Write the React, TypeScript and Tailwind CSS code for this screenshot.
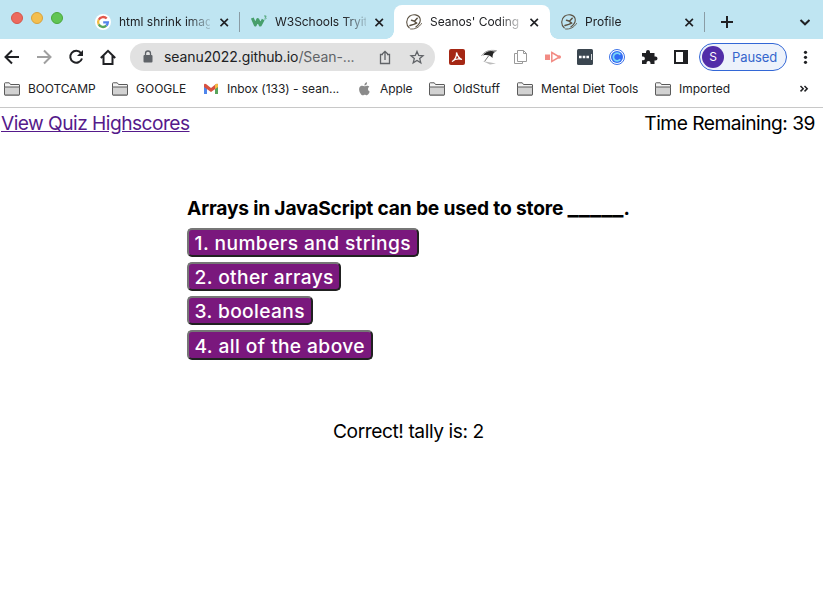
import { type ReactNode } from "react";

function Scribble() {
  return (
    <svg width="16" height="16" viewBox="0 0 16 16" fill="none" stroke="#5b5142" strokeLinecap="round">
      <path d="M3.200 13.800C-.3 11 0 5 3.500 2.300 7-.3 12.500.4 14 4.300c.8 3-1 6.500-4.200 8.700" strokeWidth="1.100" />
      <path d="M11.200 4.200L8.500 7.200 5.500 6.300" strokeWidth="1.500" />
      <path d="M8.500 7.500l2.200 1.600-3 1.300L4 11.500" strokeWidth="1.500" strokeLinejoin="round" />
      <path d="M4.500 15c4.500.5 8.500-1.500 11-5.500" strokeWidth=".9" />
    </svg>
  );
}

function GoogleIcon() {
  return (
    <svg width="16" height="16" viewBox="0 0 16 16">
      <circle cx="8" cy="8" r="8" fill="#fff" />
      <g fill="none" strokeWidth="2.300">
        <path d="M11.700 4.600A4.900 4.900 0 0 0 3.700 5.700" stroke="#e2574a" />
        <path d="M3.700 5.700a4.900 4.900 0 0 0 0 4.700" stroke="#f2bd42" />
        <path d="M3.700 10.400a4.900 4.900 0 0 0 7.600 1.300" stroke="#58a55c" />
        <path d="M11.300 11.700A4.900 4.900 0 0 0 12.900 8.300H8.200" stroke="#5383ec" />
      </g>
    </svg>
  );
}

function W3Icon() {
  return (
    <svg width="16" height="16" viewBox="0 0 16 16" fill="none" stroke="#479f6c">
      <path d="M1.300 4l3 7 2.400-5.500L9.300 11l2.900-5.500" strokeWidth="3" strokeLinejoin="round" />
      <path d="M13 2h2.200L14.200 3.300c1.600.2 1.100 2.200-.9 1.700" strokeWidth=".9" />
    </svg>
  );
}

function Cross() {
  return (
    <svg width="9" height="9" viewBox="0 0 9 9" stroke="#202124" strokeWidth="1.700" className="shrink-0">
      <path d="M.5.800l7.400 7.400M7.900.800L.5 8.200" />
    </svg>
  );
}

function Folder() {
  return (
    <svg width="16" height="14" viewBox="0 0 16 14" stroke="#5b5b5b" className="shrink-0">
      <path d="M.5 12.500V1.500Q.5.800 1.200.8H5.300L6.500 2.500H15Q15.500 2.500 15.500 3V12.500Q15.500 13 15 13H1Q.5 13 .5 12.500Z" fill="#f4f4f4" />
      <path d="M.5 5.500V12.500Q.5 13 1 13H15Q15.500 13 15.500 12.500V5.500Q15.500 5 15 5H1Q.5 5 .5 5.500Z" fill="#d2d2d2" />
    </svg>
  );
}

function Tab({ icon, children, className = "", active = false }: { icon: ReactNode; children: string; className?: string; active?: boolean }) {
  return (
    <div className={`relative flex h-[34px] shrink-0 items-center ${active ? "w-[156px] rounded-t-[8px] bg-white" : ""} ${className}`}>
      {active && (
        <>
          <span className="absolute bottom-0 -left-2 size-2 bg-[radial-gradient(circle_at_0_0,transparent_7.500px,white_8px)]" />
          <span className="absolute bottom-0 -right-2 size-2 bg-[radial-gradient(circle_at_100%_0,transparent_7.500px,white_8px)]" />
        </>
      )}
      <span className="shrink-0">{icon}</span>
      <span className="ml-2 w-[91px] whitespace-nowrap text-[12px] leading-4 text-[#202124] [mask-image:linear-gradient(to_right,black_68px,transparent_96px)]">{children}</span>
      <span className="ml-[9px]"><Cross /></span>
    </div>
  );
}

function Bookmark({ icon, children, className }: { icon: ReactNode; children: string; className: string }) {
  return (
    <div className={`flex shrink-0 items-center gap-2 ${className}`}>
      {icon}
      <span className="whitespace-nowrap">{children}</span>
    </div>
  );
}

function Answer({ children, className }: { children: string; className: string }) {
  return (
    <button className={`flex items-center rounded-[5px] border-2 border-t-[#767676] border-l-[#767676] border-r-[#212121] border-b-[#212121] bg-[#7a187d] pl-[5.500px] text-[19.200px] leading-6 font-medium whitespace-nowrap text-white ${className}`}>
      {children}
    </button>
  );
}

export default function App() {
  return (
    <div className="h-[591px] w-[823px] overflow-hidden bg-white font-['Inter','Liberation_Sans',sans-serif] text-black">
      <header className="border-b border-[#c8c8c8]">
        <div className="flex h-[39px] items-end bg-[#bfe5f2]">
          <div className="flex h-full w-[84px] shrink-0 gap-2 pt-3 pl-[11px]">
            <span className="size-3 rounded-full border border-[#d5564a] bg-[#ed6a5e]" />
            <span className="size-3 rounded-full border border-[#d9a23c] bg-[#f4bf4f]" />
            <span className="size-3 rounded-full border border-[#4aa73c] bg-[#61c554]" />
          </div>
          <Tab className="w-[155px] pl-[11px] [&>span:last-child]:ml-[10px]" icon={<GoogleIcon />}>html shrink imag</Tab>
          <span className="mb-[7px] h-5 w-px bg-[#8a9ca5]" />
          <Tab className="w-[154px] pl-[11px] tracking-[-0.05px]" icon={<W3Icon />}>W3Schools Tryit</Tab>
          <Tab className="pl-3 tracking-[-0.05px]" icon={<Scribble />} active>Seanos' Coding</Tab>
          <Tab className="w-[154px] pl-[11px]" icon={<Scribble />}>Profile</Tab>
          <span className="mb-[7px] h-5 w-px bg-[#8a9ca5]" />
          <svg width="118" height="34" viewBox="705 5 118 34" fill="none" stroke="#202124" strokeWidth="2">
            <path d="M721 22H733M727 16V28M800.500 20l4.500 4.300L809.500 20" />
          </svg>
        </div>

        <div className="flex h-9 items-center">
          <svg width="130" height="36" viewBox="0 39 130 36" fill="none" stroke="#202124" strokeWidth="2" className="shrink-0">
            <path d="M19 57H6M12 50.500L5.500 57l6.500 6.500" />
            <path d="M37 57H50M44 50.500L50.500 57 44 63.500" stroke="#a0a0a0" />
            <path d="M81 53A6 6 0 1 0 82 58.500" />
            <path d="M83 50V56H77Z" fill="#202124" stroke="none" />
            <path d="M100.800 58L108 50.800 115.200 58M103.500 56V64H112.500V56" />
          </svg>
          <div className="flex h-7 w-[305px] shrink-0 items-center rounded-full bg-[#e1e1e1]">
            <svg width="34" height="28" viewBox="130 43 34 28">
              <rect x="143.500" y="55" width="9" height="7.500" rx="1" fill="#5f6368" />
              <path d="M145.500 55V53.500a2.500 2.500 0 0 1 5 0V55" fill="none" stroke="#5f6368" strokeWidth="1.300" />
            </svg>
            <span className="w-max shrink-0 pb-[2px] text-[14px] tracking-[-0.09px] whitespace-nowrap text-[#202124]">seanu2022.github.io<span className="text-[#606367]">/Sean-...</span></span>
            <svg width="60" height="28" viewBox="375 43 60 28" fill="none" stroke="#606367" strokeWidth="1.300" className="ml-auto">
              <path d="M383 54.500H380.500V63.500H389.500V54.500H387M385 60V51.500M382.300 54L385 51.300 387.700 54" />
              <path d="M417 51.500L418.700 55.500 423 55.800 419.700 58.600 420.800 62.800 417 60.500 413.200 62.800 414.300 58.600 411 55.800 415.300 55.500Z" />
            </svg>
          </div>
          <svg width="264" height="36" viewBox="435 39 264 36" fill="none" className="shrink-0">
            <rect x="449" y="49" width="16" height="16" rx="2" fill="#a52714" />
            <path d="M456.500 52.500C457.500 56 459 58.500 462 59.500 458 58 455 59 452 61.500 455 60 457 56 456.500 52.500Z" stroke="#fff" strokeWidth="1.300" />
            <path d="M481.500 56C484 51.500 489 49.500 496.500 50.700L494 52.500" stroke="#8b8b8b" strokeWidth=".8" />
            <path d="M483 55.500C485 51.500 490 50 495 51.500 493 53 492.500 55 492.500 58 490.500 55.500 487 54.500 483 55.500Z" fill="#252525" />
            <path d="M488.500 56L484.500 61.500" stroke="#777" />
            <path d="M482.500 61L496 63.500 490 64.500Z" fill="#bdbdbd" />
            <path d="M517.500 53.500V50.500H523.500L526.500 53.500V61.500H517.500V53.500H514.500V63.500H522.500V61.500M523.500 50.500V53.500H526.500" stroke="#9a9a9a" />
            <rect x="545" y="54.500" width="5" height="5.500" fill="#f28b84" />
            <path d="M551.800 52.500L559.500 57 551.800 61.500Z" stroke="#f28b84" strokeWidth="1.500" />
            <circle cx="559.300" cy="57" r="1.700" fill="#f28b84" />
            <rect x="577" y="49" width="16" height="16" rx="1.500" fill="#3b4650" />
            <path d="M579 55.700h2.600v2.600H579zM582.700 55.700h2.600v2.600H582.700zM586.400 55.700h2.600v2.600H586.400zM591 54h.8v6H591z" fill="#fff" />
            <circle cx="617" cy="57" r="7.500" stroke="#3d73e8" strokeWidth="1" />
            <circle cx="617" cy="57" r="6" fill="#326bf4" />
            <path d="M620.200 54.700A3.800 3.800 0 1 0 620.200 59.300" stroke="#78d5f7" strokeWidth="1.800" />
            <path d="M642 53H646V52A2 2 0 0 1 650 52V53H654.500V56.500H655.500A1.900 1.900 0 0 1 655.500 60.500H654.500V64H650.500V63A1.900 1.900 0 0 0 646.500 63V64H642V60.300H643A1.900 1.900 0 0 0 643 56.500H642Z" fill="#202124" />
            <path d="M675 51H687V63H675Z" stroke="#202124" strokeWidth="2" />
            <path d="M683 50H688V64H683Z" fill="#202124" />
          </svg>
          <div className="flex h-7 w-[88px] shrink-0 items-center rounded-full border border-[#3367d6] bg-[#edf2fb] pl-[2px] text-[#3565cc]">
            <span className="flex size-[22px] items-center justify-center rounded-full bg-[#512da8] text-[12px] text-white">S</span>
            <span className="ml-2 pt-px text-[13px] tracking-[-0.1px]">Paused</span>
          </div>
          <svg width="36" height="36" viewBox="787 39 36 36" fill="#202124">
            <circle cx="805.500" cy="52.300" r="1.600" /><circle cx="805.500" cy="57.300" r="1.600" /><circle cx="805.500" cy="62.300" r="1.600" />
          </svg>
        </div>

        <div className="flex h-8 items-start pt-[5px] pl-1 text-[12px] leading-[17px] text-[#202124]">
          <Bookmark icon={<Folder />} className="w-[108px] tracking-[-0.14px]">BOOTCAMP</Bookmark>
          <Bookmark icon={<Folder />} className="w-[91px]">GOOGLE</Bookmark>
          <Bookmark className="w-[156px] tracking-[-0.03px]" icon={
            <svg width="16" height="12" viewBox="0 0 16 12" className="shrink-0">
              <path d="M1 2V11H4V4Z" fill="#4f86ec" /><path d="M12 4V11H15V2Z" fill="#58a55c" />
              <path d="M1 2Q1 0 3 1L8 5 13 1Q15 0 15 2V4L8 9 1 4Z" fill="#d85140" />
              <path d="M12 2L13 1Q15 0 15 2V4L12 6Z" fill="#f2bd42" />
            </svg>
          }>Inbox (133) - sean...</Bookmark>
          <Bookmark className="w-[70px] tracking-[-0.1px] [&>svg]:-ml-[2px] [&>span]:-ml-px" icon={
            <svg width="16" height="14" viewBox="0 0 16 14" fill="#8b8b8b" className="shrink-0">
              <path d="M10.500 4.500C9 3.300 8.500 4.300 7.500 4.200 6.300 4 5.800 3.500 4.500 3.700 1.500 4.300 1.500 8.500 3.500 11.500 5.500 14.500 6 13 7.500 12.700 9.500 12.700 9.800 14.500 12 11.300L12.700 9.700C10.500 8.500 10.500 6 12.300 4.800 11.500 3.500 9.500 3.400 8 4.200M7.500 3.500C7.300 1.800 8.300.5 10 .2 10.200 2 9.200 3.400 7.500 3.500Z" />
            </svg>
          }>Apple</Bookmark>
          <Bookmark icon={<Folder />} className="w-[88px] tracking-[0.05px]">OldStuff</Bookmark>
          <Bookmark icon={<Folder />} className="w-[138px] tracking-[-0.05px]">Mental Diet Tools</Bookmark>
          <Bookmark icon={<Folder />} className="w-[144px]">Imported</Bookmark>
          <svg width="10" height="17" viewBox="0 0 10 17" fill="none" stroke="#202124" strokeWidth="1.500"><path d="M1.500 6L4.200 8.700 1.500 11.400M5.500 6L8.200 8.700 5.500 11.400" /></svg>
        </div>
      </header>

      <main className="text-[19.200px]">
        <div className="flex justify-between pt-[3px] pr-2 pl-px leading-6">
          <a className="tracking-[-0.54px] text-[#551a8b] underline" href="#scores">View Quiz Highscores</a>
          <span className="tracking-[-0.5px]">Time Remaining: 39</span>
        </div>
        <section className="ml-[187px] pt-[61px]">
          <h1 className="h-6 leading-6 font-bold tracking-[-0.18px] whitespace-nowrap">
            Arrays in JavaScript can be used to store <span className="text-[23.900px] leading-[0] font-semibold tracking-normal">_____</span>.
          </h1>
          <div className="mt-2 flex flex-col gap-[5px]">
            <Answer className="h-[29px] w-[232px] tracking-[0.42px]">1. numbers and strings</Answer>
            <Answer className="h-[29px] w-[154px] tracking-[0.36px]">2. other arrays</Answer>
            <Answer className="h-[29px] w-[126px] tracking-[0.36px]">3. booleans</Answer>
            <Answer className="h-[30px] w-[186px] pt-px tracking-[0.41px]">4. all of the above</Answer>
          </div>
        </section>
        <p className="mt-[59px] ml-[333px] leading-6 tracking-[-0.43px]">Correct! tally is: 2</p>
      </main>
    </div>
  );
}
